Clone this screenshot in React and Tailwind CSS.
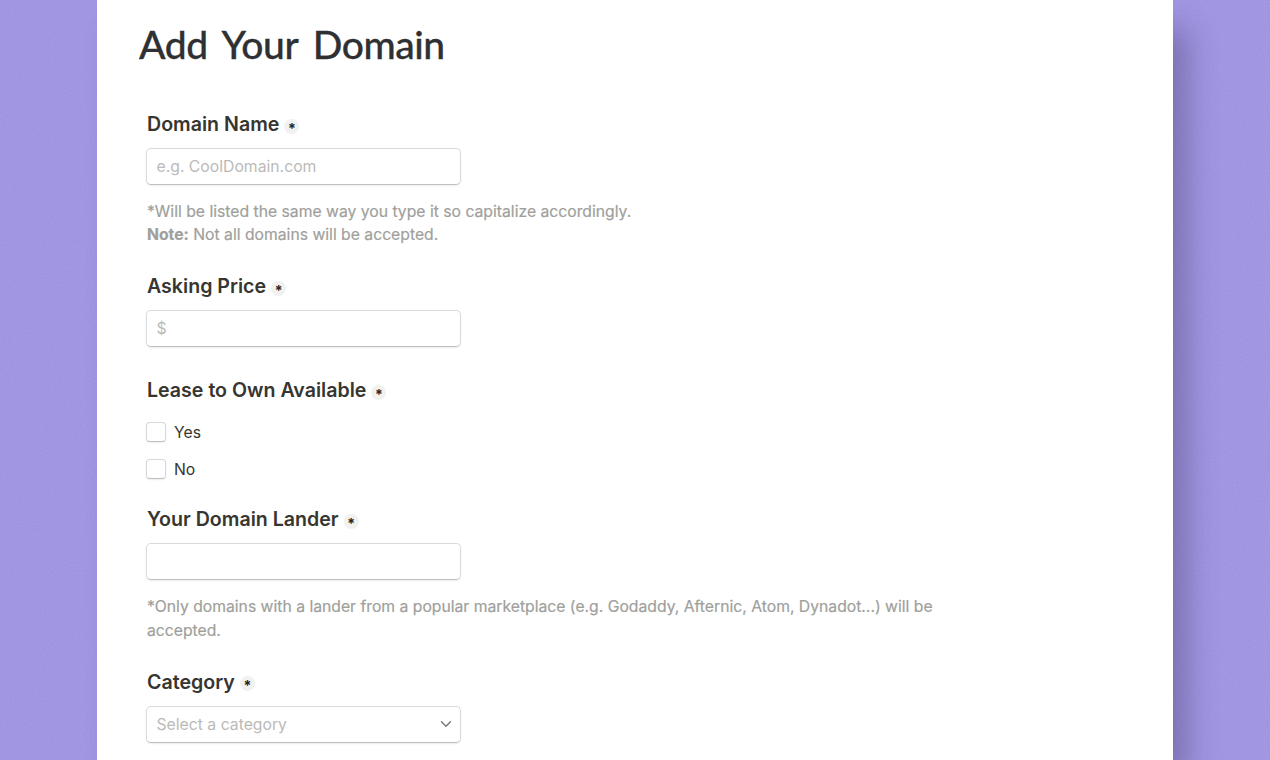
import { ChevronDown } from 'lucide-react'

const FIELD =
  'h-[37px] w-[315px] rounded-[5px] border border-[#dadada] border-b-[#bfbfbf] bg-white shadow-[0_1px_2px_rgba(0,0,0,0.08)]'

export default function App() {
  return (
    <div className="relative h-[760px] w-[1270px] overflow-hidden bg-[#9f94e5] font-['Inter',sans-serif]">
      <Grain />
      <main className="relative ml-[97px] h-[760px] w-[1076px] bg-white shadow-[18px_24px_30px_-4px_rgba(40,30,70,0.32)]">
        <h1 className="pt-[14px] pl-[42px] font-['Lato',sans-serif] text-[39px] leading-[60px] font-medium tracking-[-0.45px] [word-spacing:6px] text-[#2f3033] [-webkit-text-stroke:0.3px_#2f3033]">
          Add Your Domain
        </h1>

        <form className="ml-[49px] w-[800px] pt-[35px]">
          <Label>Domain Name</Label>
          <TextField placeholder="e.g. CoolDomain.com" />
          <Hint>
            *Will be listed the same way you type it so capitalize accordingly.
            <br />
            <strong className="font-bold">Note:</strong> Not all domains will be accepted.
          </Hint>

          <Label className="mt-[24.5px]">Asking Price</Label>
          <TextField placeholder="$" />

          <Label className="mt-[28px]">Lease to Own Available</Label>
          <div className="mt-[13px] flex flex-col gap-[9px]">
            <Option>Yes</Option>
            <Option>No</Option>
          </div>

          <Label className="mt-[21px]">Your Domain Lander</Label>
          <TextField />
          <Hint>
            *Only domains with a lander from a popular marketplace (e.g. Godaddy, Afternic, Atom, Dynadot...) will be
            accepted.
          </Hint>

          <Label className="mt-[24.5px]">Category</Label>
          <div className={`${FIELD} mt-[9px] flex items-center justify-between pr-[5px] pl-[9.5px]`}>
            <span className="text-[15.75px] text-[#bbbab8]">Select a category</span>
            <ChevronDown size={18} strokeWidth={1.9} className="text-[#777777]" />
          </div>
        </form>
      </main>
    </div>
  )
}

// Fine paper texture over the purple backdrop
function Grain() {
  return (
    <svg className="absolute inset-0 h-full w-full opacity-[0.12]" aria-hidden="true">
      <filter id="grain">
        <feTurbulence type="fractalNoise" baseFrequency="0.6" numOctaves="2" stitchTiles="stitch" />
        <feColorMatrix type="saturate" values="0" />
      </filter>
      <rect width="100%" height="100%" filter="url(#grain)" />
    </svg>
  )
}

function Label({ children, className = '' }) {
  return (
    <div className={`flex h-[30px] items-center gap-[5px] pl-px ${className}`}>
      <span className="text-[19.6px] leading-[30px] font-semibold text-[#37352f]">{children}</span>
      <span className="mt-[4px] flex size-[15px] items-center justify-center rounded-full bg-[#f1f1f0]">
        <span className="h-[13px] text-[14px] leading-[18px] font-bold text-[#25241f]">*</span>
      </span>
    </div>
  )
}

function TextField({ placeholder }) {
  return (
    <input
      type="text"
      placeholder={placeholder}
      className={`${FIELD} mt-[9px] block px-[9.5px] text-[15.75px] placeholder:text-[#bbbab8]`}
    />
  )
}

function Hint({ children }) {
  return <p className="mt-[14.5px] pl-px text-[15.72px] leading-[23.7px] text-[#a09f9c] [-webkit-text-stroke:0.2px_#a09f9c]">{children}</p>
}

function Option({ children }) {
  return (
    <label className="flex h-[28px] items-center gap-[8px]">
      <span className="size-[20px] rounded-[4px] border border-[#d8d8d8] border-b-[#bfbfbf] bg-white shadow-[0_1px_2px_rgba(0,0,0,0.08)]" />
      <span className="text-[15.75px] text-[#37352f]">{children}</span>
    </label>
  )
}
